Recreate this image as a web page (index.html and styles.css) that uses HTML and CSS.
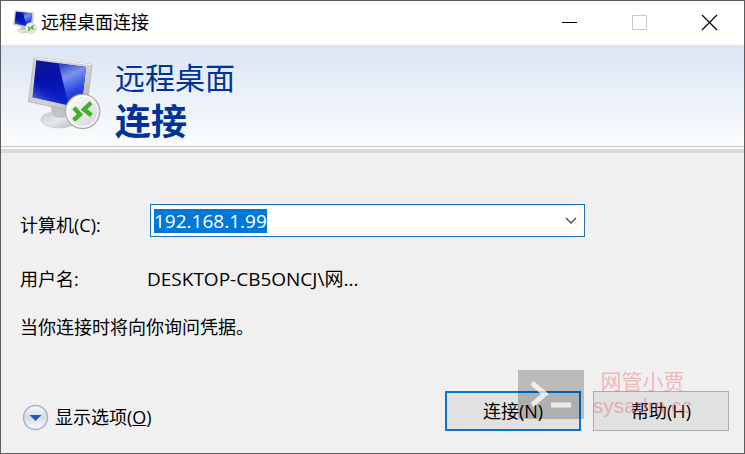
FILE: index.html
```html
<!DOCTYPE html>
<html lang="zh-CN">
<head>
<meta charset="utf-8">
<title>远程桌面连接</title>
<link rel="stylesheet" href="styles.css">
</head>
<body>
<svg class="defs" aria-hidden="true">
  <defs>
    <linearGradient id="screen" x1="0" y1="0" x2="0.3" y2="1">
      <stop offset="0" stop-color="#101c90"/><stop offset="0.4" stop-color="#0410a8"/><stop offset="1" stop-color="#0a22d0"/>
    </linearGradient>
    <linearGradient id="shine" x1="0.2" y1="0" x2="0.5" y2="1">
      <stop offset="0" stop-color="#3048c0"/><stop offset="0.3" stop-color="#7c92ee"/><stop offset="0.65" stop-color="#2c4ae4"/><stop offset="1" stop-color="#0c20d0"/>
    </linearGradient>
    <linearGradient id="glow" x1="0" y1="1" x2="0.3" y2="0.5">
      <stop offset="0" stop-color="#7f9cff"/><stop offset="1" stop-color="#0a1fc0" stop-opacity="0"/>
    </linearGradient>
    <linearGradient id="frame" x1="0" y1="0" x2="1" y2="1">
      <stop offset="0" stop-color="#d4d4d4"/><stop offset="0.6" stop-color="#cfcfcf"/><stop offset="1" stop-color="#a2a2a2"/>
    </linearGradient>
    <linearGradient id="stand" x1="0" y1="0" x2="1" y2="1">
      <stop offset="0" stop-color="#c4c8ca"/><stop offset="0.5" stop-color="#e6e8ea"/><stop offset="1" stop-color="#b8bcc0"/>
    </linearGradient>
    <linearGradient id="badge" x1="0" y1="0" x2="1" y2="1">
      <stop offset="0" stop-color="#ffffff"/><stop offset="1" stop-color="#d2d2d2"/>
    </linearGradient>
    <symbol id="remote" viewBox="24 32 216 220">
      <ellipse cx="116" cy="221" rx="54" ry="25" fill="url(#stand)" stroke="#c4c8cb" stroke-width="2"/>
      <path d="M90 175 L150 185 L144 212 Q116 222 96 208Z" fill="#c0c4c7"/>
      <path d="M42 36 L214 57 L196 204 L25 168Z" fill="url(#frame)" stroke="#a9a9a9" stroke-width="2"/>
      <path d="M48 45 L196 65 L182 187 L37 155Z" fill="url(#screen)"/>
      <path d="M114 54 L196 65 L182 187 L145 180Z" fill="url(#shine)"/>
      <path d="M48 45 L114 54 L145 180 L37 155Z" fill="url(#glow)"/>
      <path d="M42 37 L213 58" stroke="#f7f7f7" stroke-width="3"/>
      <circle cx="186" cy="197" r="51" fill="url(#badge)" stroke="#a6a6a6" stroke-width="3"/>
      <circle cx="186" cy="197" r="45" fill="none" stroke="#ffffff" stroke-width="3"/>
      <path d="M160 186 L178 206 L159 223 M211 171 L190 191 L212 208" fill="none" stroke="#3fae2a" stroke-width="13"/>
    </symbol>
  </defs>
</svg>
<main class="window">
  <header class="titlebar">
    <svg class="app-icon" aria-hidden="true"><use href="#remote"/></svg>
    <span class="title">远程桌面连接</span>
    <button class="caption" aria-label="最小化"><svg width="17" height="17"><path d="M1 8.500H16" stroke="#000"/></svg></button>
    <button class="caption" aria-label="最大化" disabled><svg width="17" height="17"><path d="M1.500 1.500H15.500V15.500H1.500Z" fill="none" stroke="#c8c8c8"/></svg></button>
    <button class="caption" aria-label="关闭"><svg width="17" height="17"><path d="M1 1L16 16M16 1L1 16" stroke="#000" stroke-width="1.200"/></svg></button>
  </header>
  <section class="banner">
    <svg class="logo" aria-hidden="true"><use href="#remote"/></svg>
    <h1><span>远程桌面</span><strong>连接</strong></h1>
  </section>
  <form class="content" onsubmit="return false">
    <div class="row">
      <label for="computer">计算机(C):</label>
      <div class="combo">
        <input id="computer" type="text" value="192.168.1.99" spellcheck="false" autocomplete="off">
        <button type="button" aria-label="展开"><svg width="12" height="8"><path d="M1 1L6 6L11 1" fill="none" stroke="#444" stroke-width="1.300"/></svg></button>
      </div>
    </div>
    <div class="row user"><span>用户名:</span><span class="account">DESKTOP-CB5ONCJ\网...</span></div>
    <p>当你连接时将向你询问凭据。</p>
    <footer class="actions">
      <button type="button" class="options">
        <svg width="27" height="27" viewBox="0 0 27 27" aria-hidden="true">
          <defs><linearGradient id="round" x1="0" y1="0" x2="0" y2="1"><stop offset="0" stop-color="#f8fafb"/><stop offset="0.5" stop-color="#d3dcdf"/><stop offset="1" stop-color="#fff"/></linearGradient></defs>
          <circle cx="13.500" cy="13.500" r="12" fill="url(#round)" stroke="#a9aed4" stroke-width="1.500"/>
          <path d="M7.500 11H19.500L13.500 17Z" fill="#2f50b4"/>
        </svg>
        <span>显示选项(<u>O</u>)</span>
      </button>
      <button type="submit" class="push primary">连接(N)</button>
      <button type="button" class="push">帮助(H)</button>
      <div class="watermark">
        <svg width="66" height="49" viewBox="0 0 66 49" aria-hidden="true"><path d="M0 0H66V49H0Z" fill="#000" opacity="0.220"/><path d="M14 13L27 24L14 35M33 35H53" fill="none" stroke="#fff" stroke-width="5" opacity="0.750"/></svg>
        <div class="mark-text"><span>网管小贾</span><span>sysadm.cc</span></div>
      </div>
    </footer>
  </form>
</main>
<script>
const computer = document.getElementById("computer");
computer.focus();
computer.select();
</script>
</body>
</html>
```

FILE: styles.css
```css
* { box-sizing: border-box; }
body {
  margin: 0;
  font: 18px/24px "Open Sans", "Noto Sans CJK SC", sans-serif;
  color: #000;
}
button, input { font: inherit; color: inherit; }
button { padding: 0; border: 0; background: none; }
svg { display: block; flex: none; }
.defs { position: absolute; width: 0; height: 0; }
.window {
  display: flex;
  flex-direction: column;
  min-height: 100vh;
  border: 1px solid #5c5c5e;
  background: #f0f0f0;
}
.titlebar {
  display: flex;
  align-items: center;
  height: 44px;
  padding: 0 0 2px 12px;
  background: #fff;
}
.app-icon { width: 24px; height: 24px; }
.title { flex: 1; margin-left: 4px; }
.caption {
  display: flex;
  align-items: center;
  justify-content: center;
  width: 70px;
  height: 42px;
}
.banner {
  display: flex;
  align-items: flex-start;
  height: 108px;
  padding: 11px 27px 0;
  background: linear-gradient(#dae5f3, #f9fbfc 90%);
  border-bottom: 4px solid #dadada;
  box-shadow: inset 0 -2px #fff, inset 0 -3px #c6c6c6;
}
.logo { width: 73px; height: 74px; }
h1 {
  display: flex;
  flex-direction: column;
  margin: 0 0 0 14px;
  font-weight: 400;
  font-size: 30px;
  line-height: 44px;
  color: #003399;
}
h1 strong { font-size: 36px; }
.content {
  display: flex;
  flex: 1;
  flex-direction: column;
  padding: 51px 15px 22px 19px;
}
.row {
  display: grid;
  grid-template-columns: 130px minmax(0, 435px);
  align-items: center;
}
.row label { padding-top: 8px; }
.combo {
  display: flex;
  align-items: center;
  height: 33px;
  border: 1px solid #2070b8;
  background: #fff;
}
.combo input {
  flex: 1;
  min-width: 0;
  padding: 0 3px;
  border: 0;
  outline: 0;
  background: none;
  font-size: 19px;
}
.combo input::selection { background: #0078d7; color: #fff; }
.combo button { padding: 0 7px; }
.user { grid-template-columns: 127px 1fr; margin-top: 30px; }
.account { font-size: 19px; }
p { margin: 24px 0 0; }
.actions {
  position: relative;
  display: flex;
  align-items: center;
  gap: 12px;
  margin-top: auto;
}
.options {
  display: flex;
  align-items: center;
  gap: 6px;
  margin: 12px auto 0 2px;
}
.push {
  width: 136px;
  height: 40px;
  border: 1px solid #adadad;
  background: #e1e1e1;
}
.primary { border: 2px solid #0078d7; }
.watermark {
  position: absolute;
  right: 37px;
  bottom: 12px;
  display: flex;
  gap: 9px;
  pointer-events: none;
}
.mark-text {
  display: flex;
  flex-direction: column;
  align-items: center;
  font-family: "Liberation Sans", "Noto Sans CJK SC", sans-serif;
  font-size: 21px;
  color: rgba(232, 90, 100, 0.400);
}
```
